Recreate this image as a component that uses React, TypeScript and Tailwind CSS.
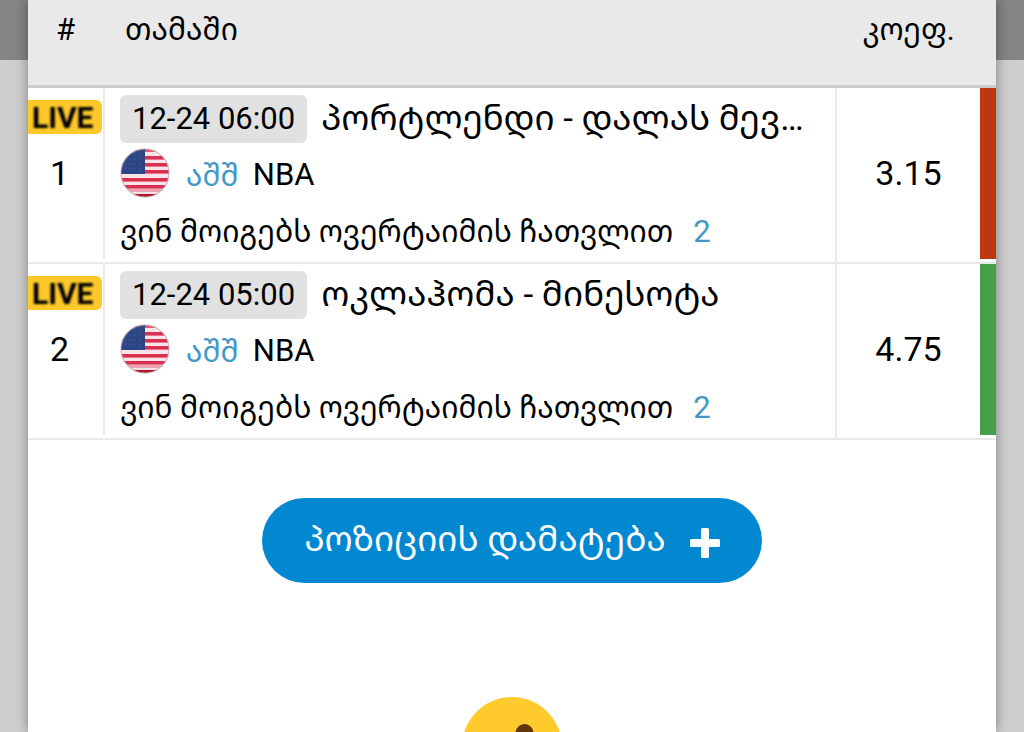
import React from 'react';

interface Bet {
    id: number;
    date: string;
    game: string;
    country: string;
    league: string;
    market: string;
    pick: string;
    odds: string;
    won: boolean;
}

const bets: Bet[] = [
    {
        id: 1,
        date: '12-24 06:00',
        game: 'პორტლენდი - დალას მევ…',
        country: 'აშშ',
        league: 'NBA',
        market: 'ვინ მოიგებს ოვერტაიმის ჩათვლით',
        pick: '2',
        odds: '3.15',
        won: false,
    },
    {
        id: 2,
        date: '12-24 05:00',
        game: 'ოკლაჰომა - მინესოტა',
        country: 'აშშ',
        league: 'NBA',
        market: 'ვინ მოიგებს ოვერტაიმის ჩათვლით',
        pick: '2',
        odds: '4.75',
        won: true,
    },
];

function UsaFlag({ id }: { id: number }) {
    const clip = `flag-${id}`;
    return (
        <svg viewBox="0 0 50 50" className="size-[50px] shrink-0" role="img" aria-label="USA">
            <clipPath id={clip}>
                <circle cx="25" cy="25" r="24" />
            </clipPath>
            <g clipPath={`url(#${clip})`}>
                <rect width="50" height="50" fill="#f8e4e8" />
                <rect width="50" height="4" fill="#e2576c" />
                {[8, 15, 22, 30, 37].map((y) => (
                    <rect key={y} y={y} width="50" height="3.6" fill="#d8304e" />
                ))}
                <rect y="41" width="50" height="3" fill="#f0a3b0" />
                <rect y="46" width="50" height="4" fill="#b5162c" />
                <rect width="25" height="26" fill="#2b4585" />
                {[5, 10, 15, 20].map((y) =>
                    [4, 9, 14, 19].map((x) => <circle key={`${x}-${y}`} cx={x + 1} cy={y + 1} r="0.8" fill="#47609b" />)
                )}
            </g>
            <circle cx="25" cy="25" r="24" fill="none" stroke="#b9a9b0" strokeOpacity="0.6" strokeWidth="1.5" />
        </svg>
    );
}

function BetRow({ bet }: { bet: Bet }) {
    return (
        <tr>
            <td className="border-b-2 border-[#e9e9e9] p-0 align-top">
                <div className="mb-[3px] h-[171px] border-r-2 border-[#e9e9e9] pt-3">
                    <div className="mr-px flex h-[34px] items-center rounded-r-md bg-[#fdc829] pl-1 text-[30px] font-bold">
                        <span className="blur-[1px]">LIVE</span>
                    </div>
                    <div className="pt-5 pr-3 text-center text-[34px] leading-[38px]">{bet.id}</div>
                </div>
            </td>
            <td className="border-r-2 border-b-2 border-[#e9e9e9] p-0 align-top">
                <div className="pt-[7px] pl-[15px] whitespace-nowrap">
                    <div className="flex items-center gap-[14px]">
                        <span className="rounded-md bg-[#e1e1e1] px-3 text-[31px] leading-[48px]">{bet.date}</span>
                        <span className="text-[35px] leading-[46px]">{bet.game}</span>
                    </div>
                    <div className="mt-1 flex h-[52px] items-center">
                        <UsaFlag id={bet.id} />
                        <a href="#country" className="ml-4 pt-1 text-[#4298c6]">{bet.country}</a>
                        <span className="ml-[14px] pt-1 text-[31px]">{bet.league}</span>
                    </div>
                    <div className="mt-1.5 flex items-center leading-[54px]">
                        <span>{bet.market}</span>
                        <span className="ml-5 text-[31px] text-[#4298c6]">{bet.pick}</span>
                    </div>
                </div>
            </td>
            <td className="border-b-2 border-[#e9e9e9] p-0 align-top">
                <div className="mb-[3px] flex h-[171px] items-center">
                    <span className="flex-1 text-center text-[34px]">{bet.odds}</span>
                    <span className={bet.won ? 'h-full w-4 bg-[#47a049]' : 'h-full w-4 bg-[#be370f]'} />
                </div>
            </td>
        </tr>
    );
}

function Emoji() {
    return (
        <svg viewBox="0 0 100 100" className="size-[100px]" aria-hidden="true">
            <circle cx="50" cy="50" r="50" fill="#ffca2c" />
            <circle cx="62.5" cy="36" r="9" fill="#613409" />
            <circle cx="28" cy="47" r="9" fill="#613409" />
            <path d="M30 72 Q52 84 72 62" fill="none" stroke="#613409" strokeWidth="5" strokeLinecap="round" />
        </svg>
    );
}

export default function App() {
    return (
        <div className="h-screen overflow-hidden bg-[#cfcfcf] bg-[linear-gradient(#858585,#858585)] bg-[length:100%_60px] bg-no-repeat px-7 font-[Roboto,'Noto_Sans','Noto_Sans_Georgian','DejaVu_Sans',sans-serif] text-[30px] text-black">
            <main className="h-full bg-white shadow-[0_0_12px_rgba(0,0,0,0.4)]">
                <table className="w-full table-fixed border-separate border-spacing-0">
                    <colgroup>
                        <col className="w-[77px]" />
                        <col />
                        <col className="w-[159px]" />
                    </colgroup>
                    <thead>
                        <tr className="h-[88px] bg-[#e9e9e9] leading-[44px]">
                            <th className="border-b-3 border-[#cccccc] p-0 pt-2 pr-0.5 align-top text-[31px] font-normal">#</th>
                            <th className="border-b-3 border-[#cccccc] p-0 pt-2 pl-5 text-left align-top font-normal">თამაში</th>
                            <th className="border-b-3 border-[#cccccc] p-0 pt-2 pr-4 text-center align-top font-normal">კოეფ.</th>
                        </tr>
                    </thead>
                    <tbody>
                        {bets.map((bet) => (
                            <BetRow key={bet.id} bet={bet} />
                        ))}
                    </tbody>
                </table>
                <div className="flex flex-col items-center pt-[58px]">
                    <button className="flex h-[85px] items-center gap-6 rounded-full bg-[#0288d1] px-[42px] text-[35px] text-white">
                        პოზიციის დამატება
                        <svg viewBox="0 0 30 30" className="mt-1 size-[30px]" fill="currentColor" aria-hidden="true">
                            <rect x="0" y="11" width="30" height="8" rx="1.5" />
                            <rect x="11" y="0" width="8" height="30" rx="1.5" />
                        </svg>
                    </button>
                    <div className="mt-[114px]">
                        <Emoji />
                    </div>
                </div>
            </main>
        </div>
    );
}
